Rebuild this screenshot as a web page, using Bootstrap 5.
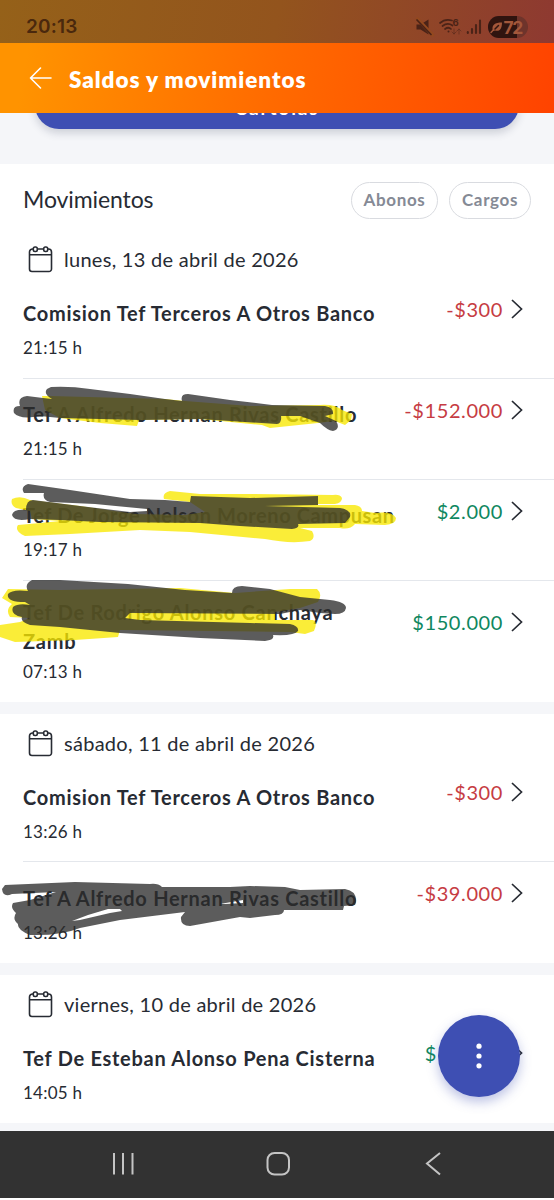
<!DOCTYPE html>
<html lang="es">
<head>
<meta charset="utf-8">
<meta name="viewport" content="width=device-width, initial-scale=1">
<title>Saldos y movimientos</title>
<link href="https://cdn.jsdelivr.net/npm/bootstrap@5.3.0/dist/css/bootstrap.min.css" rel="stylesheet">
<style>
  body { font-family: Lato, "Open Sans", sans-serif; color: #272b33; background: #fff; }
  .screen { width: 554px; height: 1200px; overflow: hidden; background: #fff; }
  .status { height: 43px; padding: 11px 25px 0 26px; background: linear-gradient(100deg, #956119 0%, #93541d 50%, #8e3931 100%); color: #4a280d; }
  .clock { font: 600 19px/32px Inter, sans-serif; letter-spacing: .2px; }
  .topbar { height: 70px; padding-left: 29px; background: linear-gradient(100deg, #ff9300 5%, #ff6a00 50%, #ff4300 100%); z-index: 2; }
  .topbar h1 { margin: 3px 0 0 16px; font-size: 22.5px; font-weight: 800; line-height: 30px; letter-spacing: .93px; color: #fff; }
  .strip { height: 51px; padding: 0 35px; background: #f5f6f9; }
  .cta { height: 48px; margin-top: -32px; border-radius: 24px; background: #3e4fb3; color: #fff; font-size: 19px; font-weight: 700; line-height: 53px; letter-spacing: 1.9px; text-align: center; box-shadow: 0 4px 8px rgba(40,50,80,.2); }
  .heading { height: 75px; padding: 18px 23px 0 23px; }
  .heading h2 { margin: -1px 0 0; font-size: 23px; font-weight: 400; line-height: 36px; letter-spacing: -.1px; }
  .pill { height: 37px; border: 1px solid #d9dbe0; border-radius: 19px; color: #858a95; font-size: 17px; font-weight: 700; line-height: 34px; letter-spacing: .65px; text-align: center; }
  .pill-abonos { width: 87px; } .pill-cargos { width: 82px; margin-left: 11px; }
  .day { height: 39px; padding: 7px 0 0 28px; font-size: 20px; line-height: 26px; letter-spacing: .28px; }
  .day svg { margin-right: 11px; flex: none; }
  .group-next .day { height: 47px; padding-top: 16px; }
  .mov { height: 101px; margin-left: 23px; border-bottom: 1px solid #e4e7ec; }
  .mov.final { border-bottom: 0; }
  .who { padding-top: 21px; font-size: 20px; font-weight: 700; line-height: 29px; letter-spacing: .72px; }
  .tight { letter-spacing: .6px; }
  .hour { padding-top: 8px; font-size: 17px; line-height: 24px; letter-spacing: .24px; }
  .amt { padding: 18px 30px 0 0; font-size: 20px; line-height: 26px; letter-spacing: .6px; }
  .amt svg { margin: 2px 0 0 7px; }
  .neg { color: #c63c43; } .pos { color: #0f8760; }
  .mov.long { height: 121px; }
  .long .who { padding-top: 17px; }
  .long .hour { padding-top: 4px; }
  .long .amt { padding-top: 28px; }
  .group-next .who { padding-top: 22px; }
  .hidden-digits { width: 66px; }
  .band { height: 12px; background: #f5f6f9; }
  .ink { position: absolute; left: -23px; top: 0; overflow: visible; pointer-events: none; }
  .ink-yellow { fill: #f8e800; opacity: .78; }
  .ink-grey { fill: #2b2b2b; opacity: .77; fill-rule: evenodd; }
  .fab { position: absolute; left: 438px; top: 1015px; width: 82px; height: 82px; border-radius: 50%; background: #3e4fb3; box-shadow: 0 5px 12px rgba(62,79,179,.35); z-index: 3; }
  .sysnav { position: absolute; left: 0; right: 0; bottom: 2px; height: 67px; background: #323232; }
</style>
</head>
<body>
<svg class="d-none">
  <symbol id="cal" viewBox="0 0 25 27"><g fill="none" stroke="#272b33" stroke-width="1.600"><path d="M5.500 3H4.500A3 3 0 0 0 1.500 6v17A2.500 2.500 0 0 0 4 25.500h17A2.500 2.500 0 0 0 23.500 23V6a3 3 0 0 0-3-3h-1M9.500 3h6M1.500 8.700h22"/><rect x="5.300" y="1" width="4" height="4.500" rx="1.700"/><rect x="15.700" y="1" width="4" height="4.500" rx="1.700"/></g></symbol>
  <symbol id="chev" viewBox="0 0 14 22"><path d="M2 2l9.500 9L2 20" fill="none" stroke="#272b33" stroke-width="1.700"/></symbol>
</svg>
<div class="screen position-relative">
  <div class="status d-flex justify-content-between">
    <span class="clock">20:13</span>
    <svg width="114" height="26" viewBox="415 14 114 26" fill="none" stroke="#4b2317" stroke-width="1.700" stroke-linecap="round" class="mt-1">
      <path d="M416.500 23.500h4l8-5v15l-8-5h-4z" fill="#4b2317" stroke="none"/>
      <path d="M417.500 18l15 16" stroke="#93491f" stroke-width="3.500"/><path d="M417 19l14 14.500"/>
      <path d="M440 22q5-4.500 12-2.500M442.500 25q5-4 10-.5M445 28q3.500-2.500 6 0"/>
      <circle cx="448.500" cy="30.500" r="1" fill="#4b2317" stroke="none"/>
      <text x="452.500" y="25" font-family="Inter" font-size="9.500" font-weight="700" fill="#4b2317" stroke="none">6</text>
      <path d="M454 28v5m-2-2 2 2 2-2M459 33v-5m-2 2 2-2 2 2" stroke-width="1" opacity=".5"/>
      <path d="M467.800 31v1M472 28v4M476 24v8M480 19.500v12.500" stroke-width="2.100"/>
      <rect x="488" y="15" width="40" height="22" rx="11" fill="#6e342b" stroke="none"/>
      <path d="M517 15h-18a11 11 0 0 0 0 22h18z" fill="#30140f" stroke="none"/>
      <path d="M493 30c-2-6 2-8.500 9-8.500 0 6-2 9.500-7 8" fill="#a3573a" stroke="none"/><path d="M491 31.500q3-4 7-6" stroke="#a3573a" stroke-width="1.500"/><path d="M495 28l3.500-3.500" stroke="#30140f" stroke-width="1.500"/>
      <text x="503.500" y="32.500" font-family="Inter" font-size="17.500" font-weight="700" letter-spacing="-1.500" fill="#a3573a" stroke="none">72</text>
    </svg>
  </div>
  <header class="topbar position-relative d-flex align-items-center">
    <svg width="24" height="24" viewBox="0 0 24 24" fill="none" stroke="#fff" stroke-width="1.600" stroke-linecap="round" stroke-linejoin="round"><path d="M22 12H1.500M11.500 2 1.500 12l10 10"/></svg>
    <h1>Saldos y movimientos</h1>
  </header>
  <div class="strip d-flex"><div class="cta flex-grow-1">Cartolas</div></div>

  <section>
    <div class="heading d-flex"><h2>Movimientos</h2><span class="pill pill-abonos ms-auto">Abonos</span><span class="pill pill-cargos">Cargos</span></div>
    <div class="day d-flex"><svg width="25" height="27"><use href="#cal"/></svg>lunes, 13 de abril de 2026</div>
    <div class="mov position-relative d-flex justify-content-between">
      <div><div class="who">Comision Tef Terceros A Otros Banco</div><div class="hour">21:15 h</div></div>
      <div class="amt d-flex neg">-$300<svg width="14" height="22"><use href="#chev"/></svg></div>
    </div>
    <div class="mov position-relative d-flex justify-content-between">
      <div><div class="who">Tef A Alfredo Hernan Rivas Castillo</div><div class="hour">21:15 h</div></div>
      <div class="amt d-flex neg">-$152.000<svg width="14" height="22"><use href="#chev"/></svg></div>
      <svg class="ink" width="554" height="101" viewBox="0 379 554 101">
        <path class="ink-yellow" d="M42 396L50 396L165 399L185 401L250 406L320 405Q335 404 342 410L352 414L351 420L345 425L335 421L318 423L270 428L262 425L200 419L139 420L137 426L100 423L60 418L45 410Z"/>
        <path class="ink-grey" d="M51 387Q70 386 90 389L130 394L165 399L182 401Q180 394 188 394L230 400L272 405L325 406Q334 408 333 414L325 416L336 421Q341 429 333 431Q327 430 320 423L300 416L281 416Q282 423 277 424L200 419L140 420L60 418L40 416Q20 420 14 413Q12 406 20 406Q17 397 27 396L43 398L52 399Q43 394 47 389Z"/>
      </svg>
    </div>
    <div class="mov position-relative d-flex justify-content-between">
      <div><div class="who tight">Tef De Jorge Nelson Moreno Campusan</div><div class="hour">19:17 h</div></div>
      <div class="amt d-flex pos">$2.000<svg width="14" height="22"><use href="#chev"/></svg></div>
      <svg class="ink" width="554" height="101" viewBox="0 480 554 101">
        <path class="ink-yellow" d="M170 491Q162 493 164 499L190 502L205 512L185 515L135 514L80 506L30 500Q20 495 12 499Q10 505 16 508L30 511L32 519L60 521L40 523L18 525Q14 531 25 536L70 534L140 530L190 532L265 539Q290 544 310 541Q316 538 312 531L300 528L340 528Q350 530 355 524L385 525Q396 524 396 518Q392 511 375 513L362 511Q362 506 355 505L318 505L318 504L335 504Q342 503 342 498Q340 494 333 495L250 494L200 494Z"/>
        <path class="ink-grey" d="M28 484L70 490L130 499L165 500L190 502L191 496L250 498L318 496L318 505L265 506L340 508Q352 510 350 517L345 523L298 524Q300 528 292 529L240 526L200 523L100 522L60 520L30 519Q14 522 12 515Q13 509 26 510Q26 500 33 500L80 506L130 512L147 511L147 509L95 504L50 502Q42 500 44 493L24 493Q20 487 28 484Z"/>
      </svg>
    </div>
    <div class="mov long final position-relative d-flex justify-content-between">
      <div><div class="who">Tef De Rodrigo Alonso Canchaya<br>Zamb</div><div class="hour">07:13 h</div></div>
      <div class="amt d-flex pos">$150.000<svg width="14" height="22"><use href="#chev"/></svg></div>
      <svg class="ink" width="554" height="121" viewBox="0 581 554 121">
        <path class="ink-yellow" d="M8 589L60 590L180 588L235 593L290 589L317 589Q323 594 318 602L300 608L275 612L275 620L313 620Q318 622 314 631L305 634L290 632L120 630L118 637L75 640L15 642L0 637L0 625L20 622L30 618L10 617Q5 610 12 604L2 598Z"/>
        <path class="ink-grey" d="M32 580L60 580L128 584L185 590L232 593Q232 586 242 586L270 589L300 597L330 600Q346 602 346 608Q345 614 335 614L320 613L300 610L280 614L130 613L125 618L140 620L250 623L290 624Q299 626 298 631Q295 636 273 635Q275 640 265 641L200 638L120 633L60 627L30 625Q20 622 22 617Q10 615 13 607Q18 603 30 605L25 602Q6 602 8 594Q12 589 28 591Q24 584 32 580Z"/>
      </svg>
    </div>
  </section>

  <div class="band"></div>
  <section class="group-next">
    <div class="day d-flex"><svg width="25" height="27"><use href="#cal"/></svg>sábado, 11 de abril de 2026</div>
    <div class="mov position-relative d-flex justify-content-between">
      <div><div class="who">Comision Tef Terceros A Otros Banco</div><div class="hour">13:26 h</div></div>
      <div class="amt d-flex neg">-$300<svg width="14" height="22"><use href="#chev"/></svg></div>
    </div>
    <div class="mov final position-relative d-flex justify-content-between">
      <div><div class="who">Tef A Alfredo Hernan Rivas Castillo</div><div class="hour">13:26 h</div></div>
      <div class="amt d-flex neg">-$39.000<svg width="14" height="22"><use href="#chev"/></svg></div>
      <svg class="ink" width="554" height="101" viewBox="0 862 554 101">
        <path class="ink-grey" d="M5 885L75 882L150 884Q158 883 162 887L230 887L250 886L285 887L300 890L345 889Q357 891 356 902L355 905L344 906L343 910L284 910Q284 915 275 915L250 918L240 917L190 926Q180 926 181 917L185 912L120 920L80 928Q60 936 30 935Q17 930 18 924Q12 919 16 913Q10 908 13 903L30 900L56 892L12 894Q3 898 2 889Z M72 921L88 915L108 909L120 909L122 911L110 913L80 920Z M220 904L243 900L243 903L225 904Z"/>
      </svg>
    </div>
  </section>

  <div class="band"></div>
  <section class="group-next">
    <div class="day d-flex"><svg width="25" height="27"><use href="#cal"/></svg>viernes, 10 de abril de 2026</div>
    <div class="mov final position-relative d-flex justify-content-between">
      <div><div class="who">Tef De Esteban Alonso Pena Cisterna</div><div class="hour">14:05 h</div></div>
      <div class="amt d-flex pos">$<span class="hidden-digits"></span><svg width="14" height="22"><use href="#chev"/></svg></div>
    </div>
  </section>
  <div class="band"></div>

  <button class="fab btn p-0 border-0 d-flex align-items-center justify-content-center" aria-label="Más opciones"><svg width="6" height="26" fill="#fff"><circle cx="3" cy="3.200" r="2.600"/><circle cx="3" cy="13" r="2.600"/><circle cx="3" cy="22.800" r="2.600"/></svg></button>
  <div class="sysnav">
    <svg width="554" height="66" viewBox="0 1131 554 66" fill="none" stroke="#c4c4c4" stroke-width="2"><path d="M114 1153v21.500M123 1153v21.500M132.500 1153v21.500"/><rect x="267.500" y="1153" width="21.500" height="21.500" rx="7"/><path d="M440 1153l-13 10.500 13 11"/></svg>
  </div>
</div>
<script src="https://cdn.jsdelivr.net/npm/bootstrap@5.3.0/dist/js/bootstrap.bundle.min.js"></script>
</body>
</html>
